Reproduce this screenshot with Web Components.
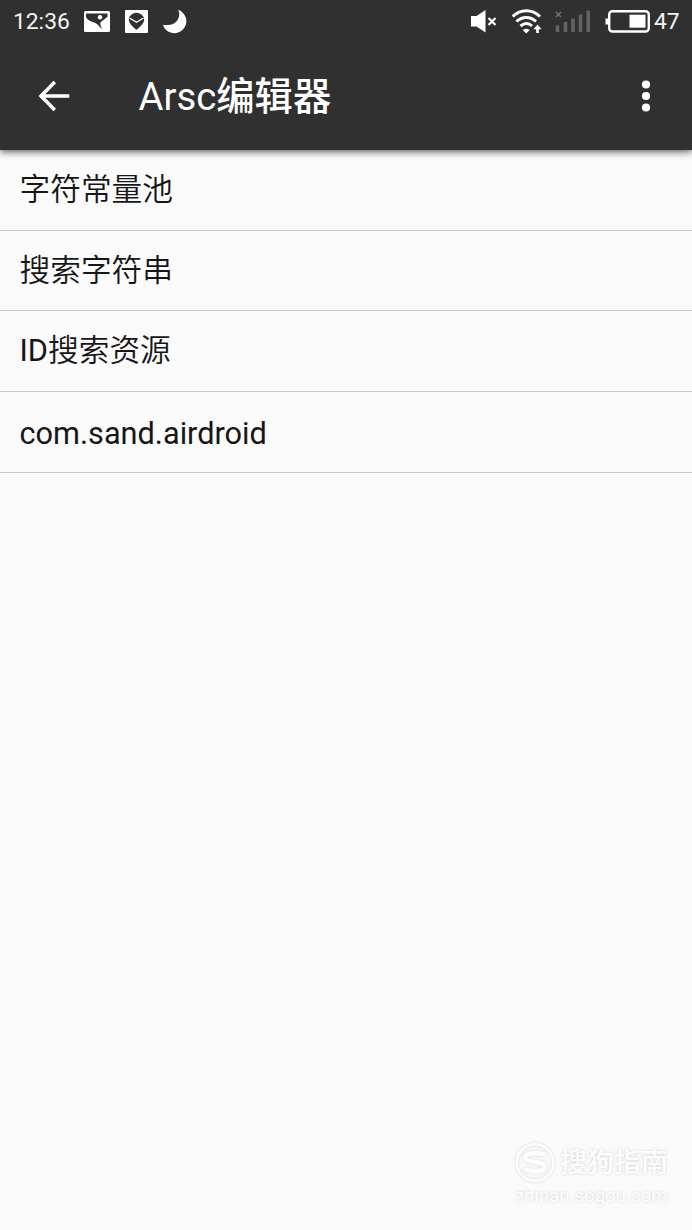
<!DOCTYPE html>
<html lang="zh-CN">
<head>
<meta charset="utf-8">
<meta name="viewport" content="width=device-width, initial-scale=1">
<title>Arsc编辑器</title>
<style>
  body {
    background: #fafafa;
    font-family: Roboto, "Noto Sans CJK SC", sans-serif;
    margin: 0;
  }
</style>
</head>
<body>
<arsc-screen>
  <arsc-status-bar slot="header" time="12:36" battery="47"></arsc-status-bar>
  <arsc-app-bar slot="header">Arsc<b>编辑器</b></arsc-app-bar>
  <arsc-item>字符常量池</arsc-item>
  <arsc-item>搜索字符串</arsc-item>
  <arsc-item><span>ID</span>搜索资源</arsc-item>
  <arsc-item latin>com.sand.airdroid</arsc-item>
  <arsc-watermark slot="mark" site="zhinan.sogou.com">搜狗指南</arsc-watermark>
</arsc-screen>

<script>
class ArscScreen extends HTMLElement {
  constructor() {
    super();

    const template = document.createElement( 'template' );
    template.innerHTML = /* template */ `
      <style>
        :host {
          background: #fafafa;
          box-sizing: border-box;
          display: flex;
          flex-direction: column;
          height: 1230px;
          overflow: hidden;
          position: relative;
          width: 692px;
        }

        header {
          background: #303030;
          box-shadow: 0 2px 7px rgba( 0, 0, 0, 0.62 );
          flex: none;
          height: 150px;
          position: relative;
          z-index: 1;
        }

        main { flex: 1; }

        /* Floats over the page in the lower right corner */
        aside {
          bottom: 22px;
          position: absolute;
          right: 22px;
        }
      </style>
      <header><slot name="header"></slot></header>
      <main><slot></slot></main>
      <aside><slot name="mark"></slot></aside>
    `;

    // Root
    this.attachShadow( {mode: 'open'} );
    this.shadowRoot.appendChild( template.content.cloneNode( true ) );
  }
}

class ArscStatusBar extends HTMLElement {
  constructor() {
    super();

    const template = document.createElement( 'template' );
    template.innerHTML = /* template */ `
      <style>
        :host {
          align-items: center;
          box-sizing: border-box;
          color: #f4f4f4;
          display: flex;
          font-size: 22.8px;
          height: 43px;
          justify-content: space-between;
          line-height: 43px;
          padding: 0 12.500px 0 13px;
        }

        div {
          align-items: center;
          display: flex;
        }

        svg { display: block; flex: none; }
        #time { width: 71px; }
        #right svg { margin-right: 2px; }
      </style>
      <div>
        <span id="time"></span>
        <svg width="106" height="43" viewBox="84 0 106 43">
          <!-- Picture -->
          <rect x="84" y="11" width="26" height="21" rx="1.500" fill="#fff"/>
          <path d="M86 13.500h21.500v3.300c-3 3-5.500 3.500-7.300 6.200.2 2.500 1 4 2 5.800-2.500-1-3.500-3.800-6-5.300C92.500 21.300 88 21.500 86 17z" fill="#303030"/>
          <circle cx="100" cy="17.200" r="2.200" fill="#fff"/>
          <!-- Shield -->
          <rect x="125" y="10" width="23" height="23" rx="1" fill="#fff"/>
          <path d="M136.500 12.800c3.500 0 7.700 3 7.700 6.500 0 4-4 7.600-7.700 10.500-3.700-2.900-7.700-6.500-7.700-10.500 0-3.500 4.200-6.500 7.700-6.500z" fill="#303030"/>
          <path d="M129.500 18l7 4.300 7-4.300" fill="none" stroke="#fff" stroke-width="1.400"/>
          <!-- Moon -->
          <path d="M179 9.800A12 12 0 1 1 163.700 24.800C170 25.700 175.500 24.500 178.300 20C180.500 16.500 180.500 13 179 9.800z" fill="#fff" transform="translate(-.8 0)"/>
        </svg>
      </div>
      <div id="right">
        <svg width="182" height="43" viewBox="470 0 182 43">
          <!-- Muted -->
          <path d="M471 16h5.500l9-6v22.500l-9-6H471z" fill="#fff"/>
          <path d="M488.500 18l7 7m0-7l-7 7" stroke="#fff" stroke-width="2.200"/>
          <!-- Wifi -->
          <g fill="none" stroke="#fff" stroke-width="3">
            <path d="M512.700 16.500c8-7.700 19.300-7.700 27.300 0"/>
            <path d="M516.500 21.500c6-5.400 13.500-5.400 19.500 0"/>
            <path d="M520.500 26c4-3.300 8-3.300 11.500 0"/>
          </g>
          <path d="M522.700 30q3.500-2.700 7 0l-3.500 3.500z" fill="#fff"/>
          <path d="M533.500 29.200l4-4.700 4 4.700h-2.700V33h-2.600v-3.800z" fill="#fff"/>
          <!-- No signal -->
          <path d="M556 12l5 5m0-5l-5 5" stroke="#707070" stroke-width="1.500"/>
          <path d="M557.500 32v-6.500M565.500 32v-10M573 32V18.500M580.500 32V14.500M588.200 32V10.500" stroke="#636363" stroke-width="3.600"/>
          <!-- Battery -->
          <rect x="609.200" y="11.200" width="39.600" height="20.300" rx="3.300" fill="none" stroke="#fff" stroke-width="2.400"/>
          <path d="M605.500 18.500h3v6h-3z" fill="#fff"/>
          <rect x="629.500" y="14.700" width="16" height="13" fill="#fff"/>
        </svg>
        <span id="battery"></span>
      </div>
    `;

    // Root
    this.attachShadow( {mode: 'open'} );
    this.shadowRoot.appendChild( template.content.cloneNode( true ) );
    this.$time = this.shadowRoot.querySelector( '#time' );
    this.$battery = this.shadowRoot.querySelector( '#battery' );
  }

  // When attributes change
  _render() {
    this.$time.textContent = this.getAttribute( 'time' );
    this.$battery.textContent = this.getAttribute( 'battery' );
  }

  // Setup
  connectedCallback() {
    this._render();
  }

  // Watched attributes
  static get observedAttributes() {
    return [
      'battery',
      'time'
    ];
  }

  attributeChangedCallback( name, old, value ) {
    this._render();
  }
}

class ArscAppBar extends HTMLElement {
  constructor() {
    super();

    const template = document.createElement( 'template' );
    template.innerHTML = /* template */ `
      <style>
        :host {
          align-items: center;
          box-sizing: border-box;
          color: #fff;
          display: flex;
          height: 107px;
          padding: 0 37px 0 38px;
        }

        svg { display: block; flex: none; }

        h1 {
          flex: 1;
          font-size: 38.3px;
          font-weight: 400;
          line-height: 107px;
          margin: 0 0 0 68.500px;
        }

        ::slotted( b ) { font-weight: 500; }
      </style>
      <svg width="32" height="107" viewBox="38 43 32 107">
        <path d="M69.300 96H41.500M54.800 82L41 96l13.800 14" fill="none" stroke="#fff" stroke-width="3.500"/>
      </svg>
      <h1><slot></slot></h1>
      <svg width="18" height="107" viewBox="637 43 18 107" fill="#fff">
        <circle cx="646" cy="84.500" r="4.100"/>
        <circle cx="646" cy="96" r="4.100"/>
        <circle cx="646" cy="107.500" r="4.100"/>
      </svg>
    `;

    // Root
    this.attachShadow( {mode: 'open'} );
    this.shadowRoot.appendChild( template.content.cloneNode( true ) );
  }
}

class ArscItem extends HTMLElement {
  constructor() {
    super();

    const template = document.createElement( 'template' );
    template.innerHTML = /* template */ `
      <style>
        :host {
          border-bottom: 1px solid #c8c8c8;
          box-sizing: border-box;
          color: #161616;
          display: block;
          font-size: 30.700px;
          font-weight: 350;
          height: 80.700px;
          line-height: 80px;
          padding-left: 19.500px;
        }

        :host( [latin] ) {
          font-weight: 400;
          line-height: 84px;
        }

        /* Latin letters keep the regular weight beside the thinner Chinese */
        ::slotted( span ) { font-weight: 400; }
      </style>
      <slot></slot>
    `;

    // Root
    this.attachShadow( {mode: 'open'} );
    this.shadowRoot.appendChild( template.content.cloneNode( true ) );
  }
}

class ArscWatermark extends HTMLElement {
  constructor() {
    super();

    const template = document.createElement( 'template' );
    template.innerHTML = /* template */ `
      <style>
        :host {
          color: #fdfdfd;
          display: block;
          text-shadow: 0 0 3px rgba( 0, 0, 0, 0.16 );
          width: 155px;
        }

        div {
          align-items: center;
          display: flex;
          font-size: 27px;
          font-weight: 500;
          gap: 4px;
          height: 42px;
          line-height: 46px;
          white-space: nowrap;
        }

        svg {
          display: block;
          filter: drop-shadow( 0 0 1.500px rgba( 0, 0, 0, 0.14 ) );
          flex: none;
        }

        p {
          font-size: 18.600px;
          line-height: 24px;
          margin: 0;
        }
      </style>
      <div>
        <svg width="41" height="42" viewBox="0 0 41 42" fill="none" stroke="#fdfdfd">
          <circle cx="20" cy="20.500" r="18.300" stroke-width="2.500"/>
          <path d="M30.500 13C24.500 10.500 10.500 10 10.500 15.500c0 5.500 19 3.500 19 9.500 0 5.500-13 5-20 2" stroke-width="4.500"/>
        </svg>
        <span><slot></slot></span>
      </div>
      <p></p>
    `;

    // Root
    this.attachShadow( {mode: 'open'} );
    this.shadowRoot.appendChild( template.content.cloneNode( true ) );
    this.$site = this.shadowRoot.querySelector( 'p' );
  }

  // Setup
  connectedCallback() {
    this.$site.textContent = this.getAttribute( 'site' );
  }
}

window.customElements.define( 'arsc-screen', ArscScreen );
window.customElements.define( 'arsc-status-bar', ArscStatusBar );
window.customElements.define( 'arsc-app-bar', ArscAppBar );
window.customElements.define( 'arsc-item', ArscItem );
window.customElements.define( 'arsc-watermark', ArscWatermark );
</script>
</body>
</html>
